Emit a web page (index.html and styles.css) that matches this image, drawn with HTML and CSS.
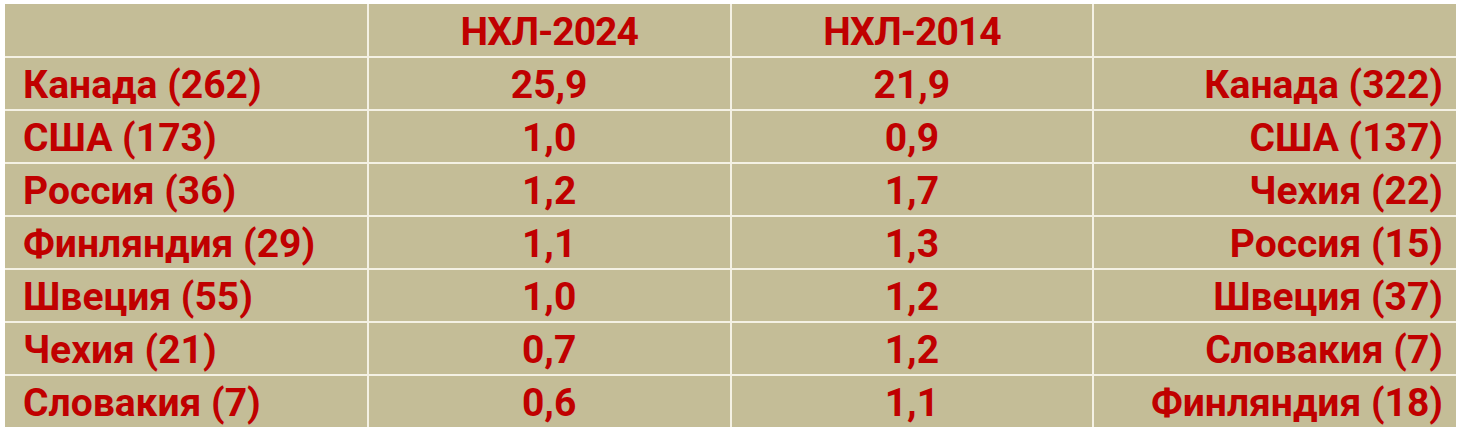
FILE: index.html
```html
<!DOCTYPE html>
<html lang="ru">
<head>
<meta charset="UTF-8">
<meta name="viewport" content="width=device-width, initial-scale=1.0">
<title>НХЛ 2024 / 2014</title>
<link rel="stylesheet" href="styles.css">
</head>
<body>

<table class="stats-table">
    <colgroup>
        <col class="col-country">
        <col class="col-value">
        <col class="col-value">
        <col class="col-country">
    </colgroup>
    <!-- Header -->
    <tr class="head-row">
        <th></th>
        <th>НХЛ-2024</th>
        <th>НХЛ-2014</th>
        <th></th>
    </tr>
    <tr>
        <td class="left">Канада (262)</td>
        <td>25,9</td>
        <td>21,9</td>
        <td class="right">Канада (322)</td>
    </tr>
    <tr>
        <td class="left">США (173)</td>
        <td>1,0</td>
        <td>0,9</td>
        <td class="right">США (137)</td>
    </tr>
    <tr>
        <td class="left">Россия (36)</td>
        <td>1,2</td>
        <td>1,7</td>
        <td class="right">Чехия (22)</td>
    </tr>
    <tr>
        <td class="left">Финляндия (29)</td>
        <td>1,1</td>
        <td>1,3</td>
        <td class="right">Россия (15)</td>
    </tr>
    <tr>
        <td class="left">Швеция (55)</td>
        <td>1,0</td>
        <td>1,2</td>
        <td class="right">Швеция (37)</td>
    </tr>
    <tr>
        <td class="left">Чехия (21)</td>
        <td>0,7</td>
        <td>1,2</td>
        <td class="right">Словакия (7)</td>
    </tr>
    <tr>
        <td class="left">Словакия (7)</td>
        <td>0,6</td>
        <td>1,1</td>
        <td class="right">Финляндия (18)</td>
    </tr>
</table>

</body>
</html>
```

FILE: styles.css
```css
body {
    margin: 0;
    padding: 4px 0 0 5px;
    background-color: #ffffff;
    font-family: Roboto, "Open Sans", sans-serif;
}

.stats-table {
    width: 1451px;
    table-layout: fixed;
    border-collapse: collapse;
    border-style: hidden;
    background-color: #c4bd97;
    color: #c00000;
    font-weight: bold;
}

.stats-table th,
.stats-table td {
    height: 47px;
    border: 2px solid #f4f1e4;
    padding: 4px 0 0;
    font-size: 39px;
    line-height: 47px;
    text-align: center;
    vertical-align: middle;
    white-space: nowrap;
}

.stats-table th {
    height: 48px;
    letter-spacing: -1px;
}

.stats-table td.left {
    text-align: left;
    padding-left: 18px;
}

.stats-table td.right {
    text-align: right;
    padding-right: 13px;
}
```
